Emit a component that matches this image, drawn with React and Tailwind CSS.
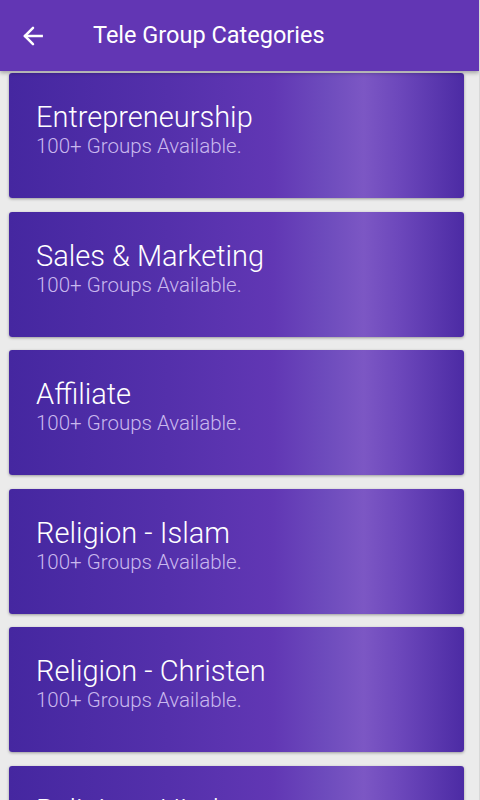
import React from "react";

const items = [
  "Entrepreneurship",
  "Sales & Marketing",
  "Affiliate",
  "Religion - Islam",
  "Religion - Christen",
  "Religion - Hindu",
];

function Card({ title }) {
  return (
    <div className="h-[125px] shrink-0 ml-[9px] mr-[15px] mb-[13.5px] rounded-[3px] shadow-[0_1px_3px_rgba(0,0,0,0.35)] bg-[linear-gradient(to_right,#4527a0_0%,#5430ab_35%,#6137b4_58%,#6e4cbd_70%,#7c57c4_78%,#6c47bb_86%,#4c2ba4_100%)] pl-[27px] pt-[28px]">
      <div className="text-[29px] leading-[33px] font-light text-white">{title}</div>
      <div className="text-[20.5px] leading-[24px] font-light text-[#c9b8ee]">100+ Groups Available.</div>
    </div>
  );
}

export default function App() {
  return (
    <div
      className="w-[480px] h-[800px] overflow-hidden bg-[#ebebeb] flex flex-col border-r border-[#d8d8d8]"
      style={{ fontFamily: "Roboto, 'Noto Sans', sans-serif" }}
    >
      <div className="h-[71px] shrink-0 bg-[#6236b4] flex items-center shadow-[0_2px_4px_rgba(0,0,0,0.3)] relative z-10">
        <div className="w-[93px] pl-[20px] flex items-center">
          <svg width="26" height="26" viewBox="0 0 24 24" fill="none" stroke="white" strokeWidth="2.3" strokeLinecap="square">
            <path d="M20 12H5" />
            <path d="M12 4.5L4.5 12L12 19.5" strokeLinecap="round" strokeLinejoin="miter" />
          </svg>
        </div>
        <div className="text-[23.5px] text-white font-normal leading-none">Tele Group Categories</div>
      </div>
      <div className="flex flex-col pt-[2px]">
        {items.map((t) => (
          <Card key={t} title={t} />
        ))}
      </div>
    </div>
  );
}
